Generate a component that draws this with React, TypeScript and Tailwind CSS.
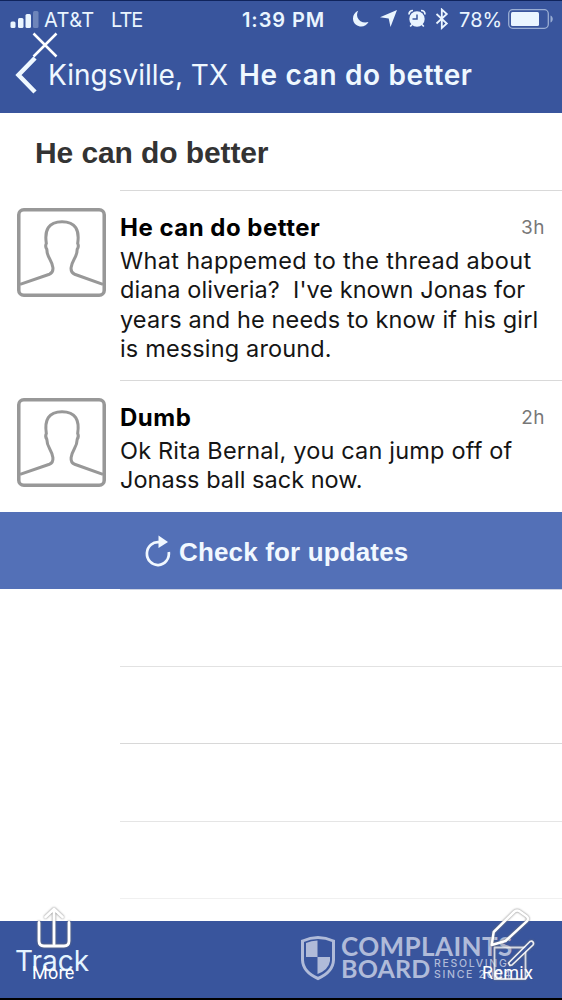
import { clsx } from "clsx";

type Line = { text: string; tracking: string };

type Post = {
  author: string;
  age: string;
  lines: Line[];
};

const posts: Post[] = [
  {
    author: "He can do better",
    age: "3h",
    lines: [
      { text: "What happemed to the thread about", tracking: "tracking-[0.32px]" },
      { text: "diana oliveria?\u00a0 I've known Jonas for", tracking: "tracking-[0.05px]" },
      { text: "years and he needs to know if his girl", tracking: "tracking-[0.12px]" },
      { text: "is messing around.", tracking: "tracking-[0.15px]" },
    ],
  },
  {
    author: "Dumb",
    age: "2h",
    lines: [
      { text: "Ok Rita Bernal, you can jump off of", tracking: "tracking-[0.18px]" },
      { text: "Jonass ball sack now.", tracking: "tracking-[0.02px]" },
    ],
  },
];

function StatusBar() {
  return (
    <div className="flex h-[38px] items-center pl-[10px] text-[#eaf5ff]">
      <svg width="29" height="18" viewBox="0 0 29 18" className="mb-[3px] shrink-0" fill="currentColor">
        <rect x="0.5" y="11.5" width="5" height="6.5" rx="1.5" />
        <rect x="8" y="8" width="5.5" height="10" rx="1.5" />
        <rect x="15.5" y="4" width="5.5" height="14" rx="1.5" />
        <rect x="23" y="1" width="5.5" height="17" rx="1.5" opacity="0.3" />
      </svg>
      <span className="ml-[5px] w-[67px] whitespace-nowrap text-[20px] tracking-[0.4px]">AT&amp;T</span>
      <span className="w-[131px] text-[20px] tracking-[-1px]">LTE</span>
      <span className="w-[110px] whitespace-nowrap text-[20px] font-semibold tracking-[0.9px]">1:39 PM</span>
      <svg width="97" height="22" viewBox="0 0 97 22" className="mb-[2px] shrink-0" fill="currentColor">
        <path d="M6.2 2.7C.3 5-.8 13 4 16.700c4.500 3.400 10.500 1.600 12.500-2.700-5 1.500-9.500-.7-11-4.600-.9-2.500-.4-4.800.7-6.700Z" />
        <path d="M45 2 38.500 19l-1.800-8.500-8.700-1.300Z" />
        <circle cx="65" cy="11" r="7.700" />
        <path d="M57 6.500c0-2.500 1.600-4 4-4M69 2.500c2.400 0 4 1.500 4 4M60 16.500l-1.800 2M70 16.500l1.800 2" fill="none" stroke="currentColor" strokeWidth="1.700" />
        <path d="M65 6.500V11H60.500" fill="none" stroke="#39559d" strokeWidth="1.500" />
        <path d="m84.500 6 10.300 9.500-5 4.500V1.500l5 4.500-10.300 9.500" fill="none" stroke="currentColor" strokeWidth="1.800" />
      </svg>
      <span className="ml-[10px] w-[49px] whitespace-nowrap text-[20px] tracking-[0.1px]">78%</span>
      <svg width="46" height="20" viewBox="0 0 46 20" className="mb-[2px] shrink-0" fill="currentColor">
        <rect x="0.700" y="0.700" width="39.600" height="18.600" rx="4" fill="none" stroke="currentColor" strokeWidth="1.300" opacity="0.55" />
        <rect x="3" y="3" width="28" height="14" rx="1.500" />
        <path d="M42.500 6.500c3 1.300 3 5.700 0 7Z" opacity="0.550" />
      </svg>
    </div>
  );
}

function Header() {
  return (
    <header className="h-[113px] border-t border-[#10245c] bg-[#39559d]">
      <StatusBar />
      <div className="flex h-[72px] items-center pl-[15px] text-[#eff8ff]">
        <svg width="22" height="38" viewBox="0 0 22 38" className="shrink-0" fill="none" stroke="currentColor" strokeWidth="4.500">
          <path d="M20 2 3.500 19 20 36" />
        </svg>
        <span className="ml-[11px] w-[191px] whitespace-nowrap text-[28px]">Kingsville, TX</span>
        <span className="whitespace-nowrap text-[28px] font-semibold tracking-[0.65px]">He can do better</span>
      </div>
    </header>
  );
}

function Avatar() {
  return (
    <svg width="89" height="89" viewBox="0 0 88 88" className="shrink-0" fill="none" stroke="#989898" strokeWidth="3.500">
      <rect x="1.750" y="1.750" width="84.500" height="84.500" rx="5" />
      <path
        d="M3 75.500 32 65.500Q36 64 35.500 59C34.500 51 29.500 49 29.500 41Q27.500 38 29 35C27 22 31 13.500 44.500 13.500S62 22 60 35Q61.500 38 59.500 41C59.500 49 54.500 51 53.500 59Q53 64 57 65.500L85 75.500"
        strokeWidth="3"
      />
    </svg>
  );
}

function PostRow({ post }: { post: Post }) {
  return (
    <div className="flex pl-[17px]">
      <div className="w-[103px] shrink-0 pt-[18px]">
        <Avatar />
      </div>
      <div className="flex-1 border-t border-[#d9d9d9] pb-[17px] pt-[19px]">
        <div className="flex h-[36px] items-center justify-between pr-[17px]">
          <h2 className="text-[24px] font-bold tracking-[0.5px] text-black">{post.author}</h2>
          <span className="text-[19px] tracking-[0.5px] text-[#777]">{post.age}</span>
        </div>
        {post.lines.map((line) => (
          <p
            key={line.text}
            className={clsx("h-[29.3px] whitespace-nowrap text-[23.5px] leading-[29.3px] text-[#151515]", line.tracking)}
          >
            {line.text}
          </p>
        ))}
      </div>
    </div>
  );
}

function Watermark() {
  return (
    <div className="absolute left-[300px] top-[935px] flex text-[#b0bbd9]">
      <svg width="36" height="46" viewBox="0 0 36 46" fill="none">
        <path d="M2.500 6Q18-1 33.500 6V25Q33 37 18 43.500 3 37 2.500 25Z" stroke="currentColor" strokeWidth="3" />
        <path d="M17.500 5.500V22H6V8Q11 5.500 17.500 5.500ZM17.500 22H30V26Q28.500 35 17.500 39Z" fill="currentColor" />
      </svg>
      <div className="ml-[5px] font-[Lato] font-bold">
        <div className="h-[22px] whitespace-nowrap text-[26px] leading-[22px] tracking-[0.400px]">COMPLAINTS</div>
        <div className="flex">
          <span className="w-[93px] text-[25px] leading-[22px] tracking-[0.2px]">BOARD</span>
          <div className="pt-[1px] font-[Inter] text-[10.500px] font-medium leading-[11px] tracking-[1.700px]">
            <div>RESOLVING</div>
            <div>SINCE 2004</div>
          </div>
        </div>
      </div>
    </div>
  );
}

function ShareIcon() {
  return (
    <svg width="40" height="44" viewBox="0 0 40 44" className="absolute left-[34px] top-[905px] drop-shadow-[0_0_1px_#777]" fill="none" stroke="white" strokeWidth="2.800" strokeLinecap="round" strokeLinejoin="round">
      <path d="M20 39V4.500M11.500 12l8.500-8 8.500 8M5 17.500V36q0 5 5 5h20q5 0 5-5V17.500" />
    </svg>
  );
}

function RemixIcon() {
  return (
    <svg width="50" height="78" viewBox="0 0 50 78" className="absolute left-[488px] top-[905px] drop-shadow-[0_0_1px_#777]" fill="none" stroke="white" strokeWidth="2.500" strokeLinejoin="round">
      <path d="M6.500 42.500H37.500V74H6.500Z" strokeWidth="1.800" opacity="0.75" />
      <path d="m3.700 40 2-13L26.500 6.500q2.500-2 5-.3l7 5q2.700 2.300.5 5L17.500 36Z" />
      <path d="M22 60.500 20.500 58 42 36.500q2-1 3 .5t0 3L24 60Z" fill="#39559d" strokeWidth="1.700" opacity="0.9" />
    </svg>
  );
}

export default function App() {
  return (
    <div className="relative h-[1000px] w-[562px] overflow-hidden bg-white font-[Inter,sans-serif]">
      <Header />
      <h1 className="flex h-[77px] items-center pl-[35px] pt-[2px] font-['Liberation_Sans',sans-serif] text-[30px] font-bold tracking-[-0.1px] text-[#333]">
        He can do better
      </h1>
      <div className="h-[322px]">
        {posts.map((post) => (
          <PostRow key={post.author} post={post} />
        ))}
      </div>
      <button className="flex h-[77px] w-full items-center bg-[#5370b7] pl-[144px] pt-[3px] text-[#f1f8ff]">
        <svg width="28" height="34" viewBox="0 0 28 34" className="shrink-0" fill="none">
          <path d="M15.500 7.200A11 11.500 0 1 0 24.800 17" stroke="currentColor" strokeWidth="2.700" />
          <path d="m14.500 0.500 9.500 6.500-9.500 6Z" fill="currentColor" />
        </svg>
        <span className="ml-[7px] whitespace-nowrap font-['Liberation_Sans',sans-serif] text-[26px] font-bold tracking-[0.15px]">
          Check for updates
        </span>
      </button>
      <div className="ml-[120px] h-[332px]">
        <div className="h-[77px] border-t border-[#cdd3e2]" />
        <div className="h-[77px] border-t border-[#e2e2e2]" />
        <div className="h-[78px] border-t border-[#d8d8d8]" />
        <div className="h-[77px] border-t border-[#e5e5e5]" />
        <div className="h-[23px] border-t border-[#f0f0f0]" />
      </div>
      <footer className="h-[79px] border-b-2 border-black bg-[#39559d] pl-[15px] pt-[19px] text-[28px] leading-[42px] text-[#e4f4ff]">
        Track
      </footer>

      <svg width="28" height="28" viewBox="0 0 28 28" className="absolute left-[31px] top-[31px]" stroke="white" strokeWidth="2.500">
        <path d="m2.500 2.500 23 23m0-23-23 23" />
      </svg>
      <Watermark />
      <ShareIcon />
      <RemixIcon />
      <span className="absolute left-[32px] top-[962px] font-[Roboto] text-[18px] leading-[22px] tracking-[0.3px] text-white">More</span>
      <span className="absolute left-[482px] top-[962px] font-[Roboto] text-[18px] leading-[22px] tracking-[0.3px] text-white">Remix</span>
    </div>
  );
}
